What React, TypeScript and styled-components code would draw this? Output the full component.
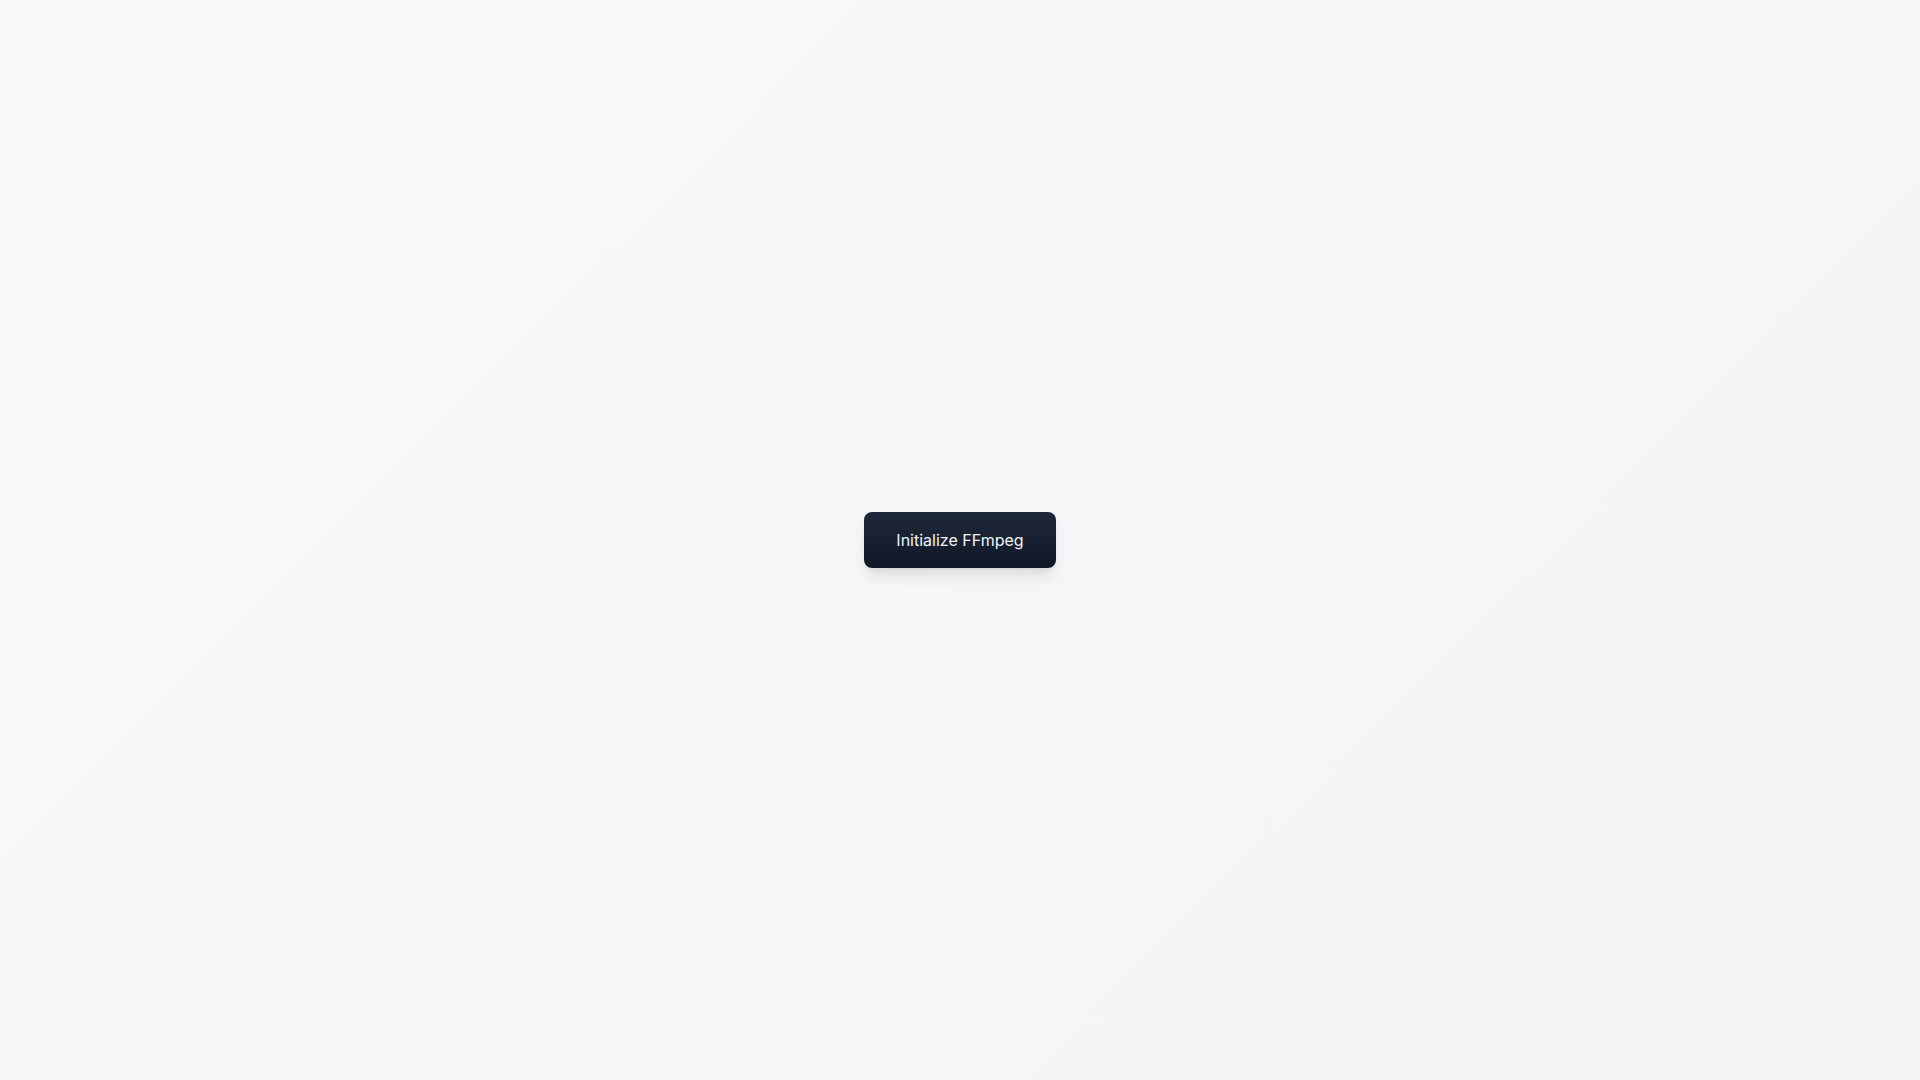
import React from 'react'
import styled, { createGlobalStyle } from 'styled-components'

const GlobalStyle = createGlobalStyle`
  html, body {
    margin: 0;
    padding: 0;
    height: 100%;
  }
  body {
    font-family: Inter, "Noto Sans", sans-serif;
  }
  #root {
    height: 100%;
  }
`

function App() {
  return (
    <>
      <GlobalStyle />
      <Page>
        <InitButton type="button">Initialize FFmpeg</InitButton>
      </Page>
    </>
  )
}

export default App

const Page = styled.div`
  box-sizing: border-box;
  width: 100%;
  min-height: 100vh;
  display: flex;
  align-items: center;
  justify-content: center;
  background: linear-gradient(135deg, #f8fafc 0%, #f5f6f8 50%, #f3f4f6 100%);
`

const InitButton = styled.button`
  box-sizing: border-box;
  width: 192px;
  height: 56px;
  padding: 16px 24px;
  border: none;
  border-radius: 8px;
  background: linear-gradient(180deg, #1e293b 0%, #111827 100%);
  color: #f1f5f9;
  font-family: Inter, "Noto Sans", sans-serif;
  font-size: 16px;
  font-weight: 400;
  line-height: 24px;
  cursor: pointer;
  box-shadow: 0 10px 15px -3px rgba(0, 0, 0, 0.1),
    0 4px 6px -4px rgba(0, 0, 0, 0.1);
`
